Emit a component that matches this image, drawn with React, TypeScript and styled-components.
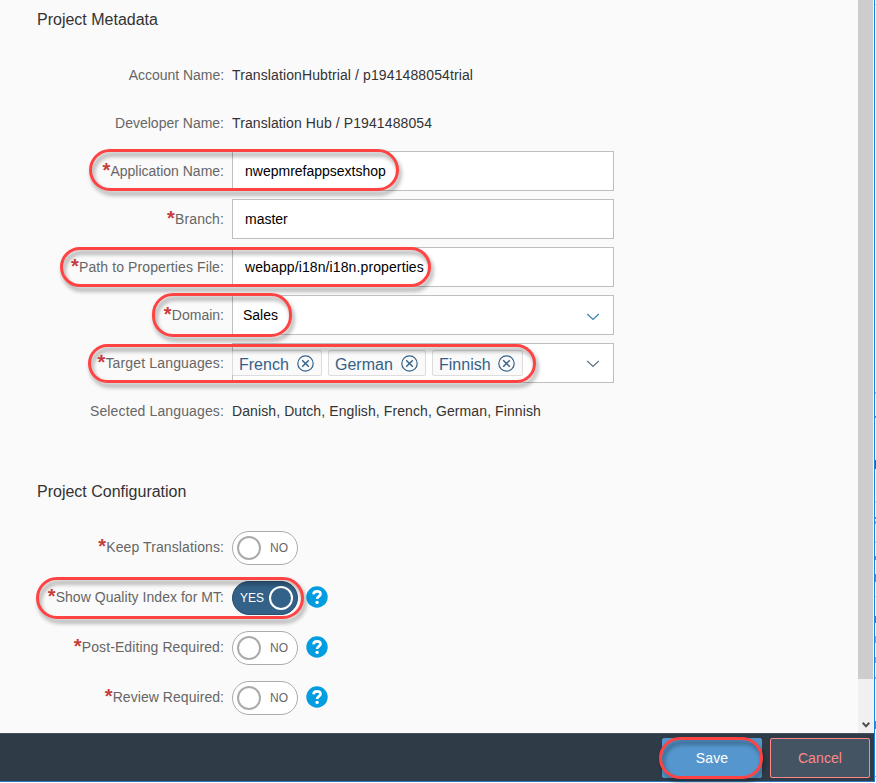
import React from "react";
import styled, { createGlobalStyle } from "styled-components";

const GlobalStyle = createGlobalStyle`
  *, *::before, *::after { box-sizing: border-box; }
  body { margin: 0; background: #fff; overflow: hidden; }
`;

const Screen = styled.div`
  position: relative;
  display: grid;
  grid-template-columns: 874px 1px 1px;
  grid-template-rows: 781px 1px 1px;
  width: 876px;
  height: 783px;
  overflow: hidden;
  font-family: "Liberation Sans", Arial, sans-serif;
  font-size: 14px;
  color: #333;
`;

const Window = styled.div`
  display: flex;
  flex-direction: column;
`;

const FrameRight = styled.div`
  background: #1583dc;
  grid-row: 1 / 3;
  grid-column: 2;
`;

const FrameBottom = styled.div`
  grid-row: 2;
  grid-column: 1;
  background: #2b78bd;
`;

const Backdrop = styled.div`
  grid-row: 1 / 4;
  grid-column: 3;
  padding-top: 4px;
  display: flex;
  flex-direction: column;
`;

const Fleck = styled.i<{ $gap: number; $size: number; $color: string }>`
  flex: none;
  margin-top: ${(p) => p.$gap}px;
  height: ${(p) => p.$size}px;
  background: ${(p) => p.$color};
`;

const Body = styled.div`
  display: flex;
  height: 733px;
`;

const Content = styled.main`
  width: 858px;
  padding-left: 37px;
  background: #fafafa;
`;

const Heading = styled.h2<{ $bottom: number }>`
  margin: 0 0 ${(p) => p.$bottom}px;
  height: 39px;
  font-size: 16px;
  line-height: 39px;
  font-weight: 400;
  color: #333;
`;

const Section = styled.section<{ $bottom?: number }>`
  margin-bottom: ${(p) => p.$bottom ?? 0}px;
`;

const Row = styled.div<{ $height: number }>`
  display: grid;
  grid-template-columns: 187px 382px;
  column-gap: 8px;
  align-items: center;
  height: ${(p) => p.$height}px;
`;

const Label = styled.label<{ $spacing: number; $lift: number }>`
  display: flex;
  justify-content: flex-end;
  padding-bottom: ${(p) => p.$lift}px;
  line-height: 16px;
  white-space: nowrap;
  color: #666;
  letter-spacing: ${(p) => p.$spacing}px;
`;

const Required = styled.span`
  width: 8px;
  height: 16px;
  font-size: 20px;
  font-weight: 700;
  line-height: 14px;
  letter-spacing: 0;
  color: #c83c3c;
`;

const Value = styled.span<{ $spacing: number }>`
  line-height: 16px;
  white-space: nowrap;
  letter-spacing: ${(p) => p.$spacing}px;
`;

const Field = styled.div<{ $inset: number }>`
  display: flex;
  align-items: center;
  justify-content: space-between;
  height: 40px;
  padding: 0 13px 0 ${(p) => p.$inset}px;
  border: 1px solid #bfbfbf;
  background: #fff;
  color: #000;
`;

const Tokens = styled.div`
  display: flex;
  gap: 6px;
  margin-left: -1px;
`;

const Token = styled.span<{ $width: number }>`
  display: flex;
  align-items: center;
  justify-content: space-between;
  width: ${(p) => p.$width}px;
  height: 26px;
  padding: 3px 7px 0 6px;
  border: 1px solid #ddd;
  border-radius: 2px;
  background: #fafafa;
  font-size: 16px;
  line-height: 22px;
  color: #346187;
  svg { margin-top: -3px; }
`;

const SwitchLine = styled.div`
  display: flex;
  align-items: center;
  gap: 8px;
`;

const Toggle = styled.div<{ $on: boolean }>`
  display: flex;
  flex-direction: ${(p) => (p.$on ? "row-reverse" : "row")};
  align-items: center;
  justify-content: space-between;
  width: 66px;
  height: 34px;
  padding: ${(p) => (p.$on ? "0 4px 0 7px" : "0 9px 0 4px")};
  border: 1px solid ${(p) => (p.$on ? "#2a4f6e" : "#ababab")};
  border-radius: 17px;
  background: ${(p) => (p.$on ? "#346187" : "#fff")};
  color: ${(p) => (p.$on ? "#fff" : "#666")};
  font-size: 12px;
`;

const Knob = styled.span<{ $on: boolean }>`
  width: 24px;
  height: 24px;
  border: 2px solid ${(p) => (p.$on ? "#fff" : "#ababab")};
  border-radius: 50%;
`;

const Help = styled.span`
  display: grid;
  width: 22px;
  height: 22px;
  margin-top: -3px;
  svg { display: block; }
`;

const Scrollbar = styled.div`
  display: flex;
  flex-direction: column;
  justify-content: space-between;
  align-items: center;
  width: 16px;
  padding-bottom: 5px;
  border-right: 1px solid #f4f6f8;
  background: #f0f0f0;
`;

const Thumb = styled.div`
  width: 15px;
  height: 679px;
  background: #cdcdcd;
`;

const Footer = styled.footer`
  display: flex;
  align-items: flex-start;
  justify-content: flex-end;
  gap: 8px;
  height: 48px;
  padding: 4px 4px 0 0;
  border-top: 1px solid #45525e;
  background: #2f3c48;
`;

const Button = styled.button<{ $primary?: boolean }>`
  width: 100px;
  height: 40px;
  padding: 0;
  border: 1px solid ${(p) => (p.$primary ? "#5496cd" : "#ff8888")};
  border-radius: 2px;
  background: ${(p) => (p.$primary ? "#5496cd" : "#445463")};
  color: ${(p) => (p.$primary ? "#fff" : "#ff8888")};
  font: 14px "Liberation Sans", Arial, sans-serif;
  letter-spacing: 0.1px;
`;

/* Callout drawn on top of the form around the parts that need attention. */
const Callout = styled.div<{ $x: number; $y: number; $w: number; $h: number }>`
  position: absolute;
  left: ${(p) => p.$x}px;
  top: ${(p) => p.$y}px;
  width: ${(p) => p.$w}px;
  height: ${(p) => p.$h}px;
  border: 3px solid #ff4343;
  border-radius: 21px;
  filter: drop-shadow(2px 4px 2px rgba(0, 0, 0, 0.4));
  pointer-events: none;
`;

const flecks: [number, number, string][] = [
  [0, 1, "#a8d4f4"], [387, 2, "#8cc4f0"], [22, 2, "#3c9ce4"], [42, 9, "#3a5f88"],
  [32, 2, "#b8e0fa"], [14, 2, "#209cec"], [2, 3, "#60b4f0"], [17, 2, "#b8dcf8"],
  [13, 4, "#209cec"], [14, 8, "#6088b4"], [14, 1, "#a8d4f4"], [19, 7, "#587ca8"],
  [13, 7, "#88a4c8"], [14, 6, "#88a8d0"], [14, 2, "#80b0e0"], [42, 8, "#708098"],
  [47, 1, "#60a8e4"],
];

const callouts = [
  [89, 149, 310, 42], [60, 247, 371, 40], [152, 293, 140, 44],
  [88, 344, 448, 39], [36, 577, 268, 42], [659, 737, 104, 42],
];

const Chevron = ({ color, drop = 1 }: { color: string; drop?: number }) => (
  <svg width="14" height="12" viewBox={`0 ${-2 - drop} 14 12`} fill="none" stroke={color} strokeWidth="1.2">
    <path d="M1.2 1L7 6.4L12.8 1" />
  </svg>
);

const Remove = () => (
  <svg width="17" height="17" viewBox="0 0 17 17" fill="none" stroke="#346187" strokeWidth="1.2">
    <circle cx="8.5" cy="8.5" r="7.7" />
    <path d="M5.2 5.2l6.6 6.6M11.8 5.2l-6.6 6.6" strokeWidth="1.4" />
  </svg>
);

const HelpIcon = () => (
  <Help>
    <svg width="22" height="22" viewBox="0 0 22 22">
      <circle cx="11" cy="11" r="10.7" fill="#009de0" />
      <path d="M7.5 8.4C7.6 6.4 9 5.4 11 5.4c2.1 0 3.5 1 3.5 2.7 0 2.3-3.4 2.3-3.4 4.8" fill="none" stroke="#fff" strokeWidth="2.7" />
      <circle cx="11.1" cy="16.4" r="1.7" fill="#fff" />
    </svg>
  </Help>
);

type LineProps = {
  label: string;
  required?: boolean;
  spacing?: number;
  tall?: boolean;
  children: React.ReactNode;
};

const Line = ({ label, required, spacing = 0, tall, children }: LineProps) => (
  <Row $height={tall ? 50 : 48}>
    <Label $spacing={spacing} $lift={tall ? 2 : 0}>
      {required && <Required>*</Required>}
      {label}
    </Label>
    {children}
  </Row>
);

const Switch = ({ on = false, help = false }: { on?: boolean; help?: boolean }) => (
  <SwitchLine>
    <Toggle $on={on}>
      <Knob $on={on} />
      <span>{on ? "YES" : "NO"}</span>
    </Toggle>
    {help && <HelpIcon />}
  </SwitchLine>
);

export default function App() {
  return (
    <Screen>
      <GlobalStyle />
      <Window>
        <Body>
          <Content>
            <Section $bottom={37}>
              <Heading $bottom={12}>Project Metadata</Heading>
              <Line label="Account Name:" spacing={-0.03}>
                <Value $spacing={0.11}>TranslationHubtrial / p1941488054trial</Value>
              </Line>
              <Line label="Developer Name:">
                <Value $spacing={0.1}>Translation Hub / P1941488054</Value>
              </Line>
              <Line label="Application Name:" required>
                <Field $inset={12}><Value $spacing={0}>nwepmrefappsextshop</Value></Field>
              </Line>
              <Line label="Branch:" required spacing={0.1}>
                <Field $inset={12}><Value $spacing={0}>master</Value></Field>
              </Line>
              <Line label="Path to Properties File:" required spacing={0.11}>
                <Field $inset={12}><Value $spacing={0.11}>webapp/i18n/i18n.properties</Value></Field>
              </Line>
              <Line label="Domain:" required>
                <Field $inset={10}>
                  <Value $spacing={0}>Sales</Value>
                  <Chevron color="#3a80b0" drop={2} />
                </Field>
              </Line>
              <Line label="Target Languages:" required spacing={0.15}>
                <Field $inset={0}>
                  <Tokens>
                    <Token $width={90}>French<Remove /></Token>
                    <Token $width={98}>German<Remove /></Token>
                    <Token $width={91}>Finnish<Remove /></Token>
                  </Tokens>
                  <Chevron color="#5a7484" />
                </Field>
              </Line>
              <Line label="Selected Languages:" spacing={0.13}>
                <Value $spacing={0.1}>Danish, Dutch, English, French, German, Finnish</Value>
              </Line>
            </Section>
            <Section>
              <Heading $bottom={12}>Project Configuration</Heading>
              <Line label="Keep Translations:" required tall spacing={0.1}><Switch /></Line>
              <Line label="Show Quality Index for MT:" required tall spacing={0.04}><Switch on help /></Line>
              <Line label="Post-Editing Required:" required tall spacing={0.1}><Switch help /></Line>
              <Line label="Review Required:" required tall spacing={0.05}><Switch help /></Line>
            </Section>
          </Content>
          <Scrollbar>
            <Thumb />
            <svg width="8" height="6" viewBox="0 0 8 6" fill="none" stroke="#505050" strokeWidth="2">
              <path d="M.7.8L4 4.2 7.3.8" />
            </svg>
          </Scrollbar>
        </Body>
        <Footer>
          <Button $primary>Save</Button>
          <Button>Cancel</Button>
        </Footer>
      </Window>
      <FrameRight />
      <FrameBottom />
      <Backdrop>
        {flecks.map(([gap, size, color], i) => (
          <Fleck key={i} $gap={gap} $size={size} $color={color} />
        ))}
      </Backdrop>
      {callouts.map(([x, y, w, h]) => (
        <Callout key={y} $x={x} $y={y} $w={w} $h={h} />
      ))}
    </Screen>
  );
}
